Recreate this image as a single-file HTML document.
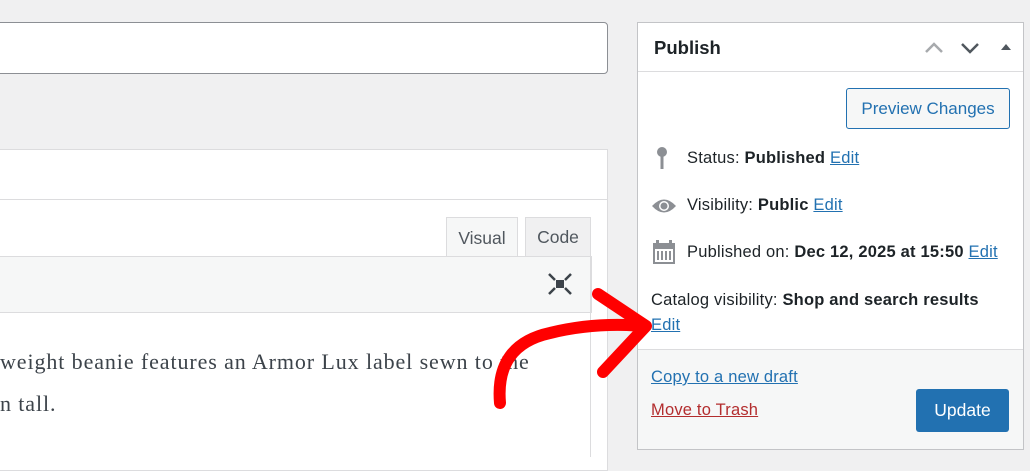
<!DOCTYPE html>
<html><head><style>
body{margin:0;width:1030px;height:457px;background:#f0f0f1;position:relative;overflow:hidden;font-family:"Liberation Sans",sans-serif;color:#1d2327}
.a{position:absolute}
.lnk{color:#2271b1;text-decoration:underline}
.row{position:absolute;left:651px;font-size:16.5px;letter-spacing:0.2px;white-space:nowrap}
</style></head><body>
<div class="a" style="left:-10px;top:22px;width:616px;height:50px;background:#fff;border:1px solid #8c8f94;border-radius:4px"></div>
<div class="a" style="left:-2px;top:149px;width:608px;height:320px;background:#fff;border:1px solid #dcdcde"></div>
<div class="a" style="left:0;top:199px;width:607px;height:1px;background:#dcdcde"></div>
<div class="a" style="left:446px;top:217px;width:70px;height:40px;background:#f6f7f7;border:1px solid #dcdcde;border-bottom:none;font-size:17.5px;color:#50575e;text-align:center;line-height:40px">Visual</div>
<div class="a" style="left:525px;top:217px;width:64px;height:38px;background:#f0f0f1;border:1px solid #dcdcde;font-size:17.5px;color:#50575e;text-align:center;line-height:38px">Code</div>
<div class="a" style="left:-2px;top:256px;width:592px;height:55px;background:#f6f7f7;border:1px solid #dcdcde"></div>
<div class="a" style="left:590px;top:256px;width:1px;height:201px;background:#dcdcde"></div>
<svg class="a" style="left:548px;top:273px" width="24" height="22" viewBox="0 0 24 22"><rect x="8" y="7" width="8" height="8" fill="#3c434a"/><path d="M1 1l6 6M23 1l-6 6M1 21l6-6M23 21l-6-6" stroke="#3c434a" stroke-width="2.5"/></svg>
<div class="a" style="left:0;top:341px;font-family:'Liberation Serif',serif;font-size:22px;letter-spacing:0.9px;color:#3c434a;line-height:42px;white-space:nowrap">weight beanie features an Armor Lux label sewn to the<br>n tall.</div>
<div class="a" style="left:637px;top:22px;width:385px;height:426px;background:#fff;border:1px solid #c3c4c7"></div>
<div class="a" style="left:638px;top:71px;width:385px;height:1px;background:#dcdcde"></div>
<div class="a" style="left:654px;top:37px;font-size:18.5px;font-weight:bold">Publish</div>
<svg class="a" style="left:922px;top:38px" width="100" height="20"><path d="M4 14l8-8 8 8" stroke="#a7aaad" stroke-width="2.5" fill="none"/><path d="M40 6l8 8 8-8" stroke="#50575e" stroke-width="2.5" fill="none"/><path d="M79 12l5-6 5 6z" fill="#50575e"/></svg>
<div class="a" style="left:846px;top:88px;width:162px;height:39px;border:1px solid #2271b1;border-radius:3px;background:#f6f7f7;color:#2271b1;font-size:17px;text-align:center;line-height:39px">Preview Changes</div>
<svg class="a" style="left:655px;top:147px" width="14" height="24"><circle cx="7" cy="5" r="5" fill="#8c8f94"/><rect x="5.5" y="8" width="3" height="14" fill="#8c8f94"/></svg>
<div class="row" style="left:687px;top:149px">Status: <b>Published</b> <span class="lnk">Edit</span></div>
<svg class="a" style="left:651px;top:197px" width="26" height="18"><path d="M1 9Q13-4 25 9Q13 22 1 9z" fill="#8c8f94"/><circle cx="13" cy="9" r="5" fill="#fff"/><circle cx="13" cy="9" r="3.5" fill="#8c8f94"/></svg>
<div class="row" style="left:687px;top:196px">Visibility: <b>Public</b> <span class="lnk">Edit</span></div>
<svg class="a" style="left:653px;top:240px" width="22" height="24"><rect x="0" y="3" width="22" height="21" fill="#8c8f94"/><rect x="2" y="9" width="18" height="13" fill="#fff"/><path d="M5 11v9M9 11v9M13 11v9M17 11v9" stroke="#8c8f94" stroke-width="2"/><rect x="3" y="0" width="3" height="6" fill="#8c8f94"/><rect x="16" y="0" width="3" height="6" fill="#8c8f94"/></svg>
<div class="row" style="left:687px;top:243px">Published on: <b>Dec 12, 2025 at 15:50</b> <span class="lnk">Edit</span></div>
<div class="row" style="top:291px">Catalog visibility: <b>Shop and search results</b></div>
<div class="row lnk" style="top:316px">Edit</div>
<div class="a" style="left:638px;top:349px;width:385px;height:99px;background:#f6f7f7;border-top:1px solid #dcdcde"></div>
<div class="row lnk" style="top:368px">Copy to a new draft</div>
<div class="row" style="top:401px;color:#b32d2e;text-decoration:underline">Move to Trash</div>
<div class="a" style="left:916px;top:389px;width:93px;height:43px;background:#2271b1;border-radius:3px;color:#fff;font-size:17.5px;text-align:center;line-height:43px">Update</div>
<svg class="a" style="left:0;top:0" width="1030" height="457"><path d="M500 403Q495 345 550 333Q595 322 643 326M598 294L646 326L603 372" stroke="#f00" stroke-width="12" fill="none" stroke-linecap="round" stroke-linejoin="round"/></svg>
</body></html>
